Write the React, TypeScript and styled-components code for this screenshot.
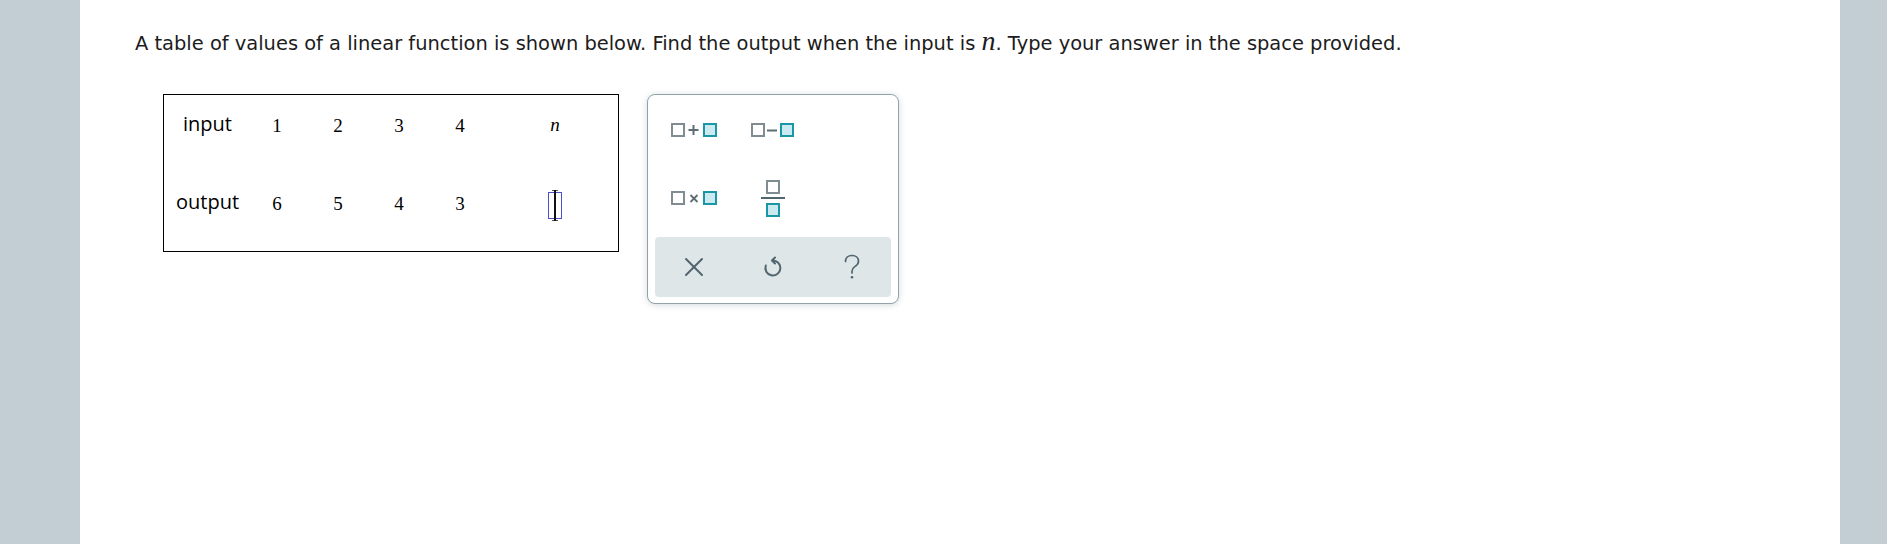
import React from "react";
import styled, { createGlobalStyle } from "styled-components";

const Global = createGlobalStyle`
  html, body, #root { margin: 0; padding: 0; height: 100%; }
  body { background: #ffffff; font-family: "DejaVu Sans", Verdana, sans-serif; }
  *, *::before, *::after { box-sizing: border-box; }
`;

const Page = styled.div`
  display: flex;
  height: 100vh;
`;

const Band = styled.div<{ $w: number }>`
  flex: 0 0 ${(p) => p.$w}px;
  background: #c2ced3;
`;

const Main = styled.main`
  flex: 1;
  background: #ffffff;
  padding: 32px 0 0 55px;
`;

const Question = styled.p`
  margin: 0;
  font-family: "DejaVu Sans", Verdana, sans-serif;
  font-size: 19.45px;
  line-height: 24px;
  color: #1c1c1c;
`;

const MathVar = styled.span<{ $size: number }>`
  font-family: "Liberation Serif", "Times New Roman", serif;
  font-style: italic;
  font-size: ${(p) => p.$size}px;
  line-height: 0;
`;

const Workspace = styled.div`
  display: flex;
  align-items: flex-start;
  gap: 28px;
  margin-top: 38px;
  padding-left: 28px;
`;

const ValueTable = styled.div`
  display: grid;
  grid-template-columns: 67px repeat(4, 50px) 118px;
  grid-template-rows: 60px 60px;
  column-gap: 11px;
  row-gap: 18px;
  padding: 0 4px 18px 10px;
  border: 1px solid #000;
  align-items: center;
  justify-items: center;
  color: #000;
`;

const RowLabel = styled.span`
  font-family: "Open Sans", "Noto Sans", sans-serif;
  font-size: 20px;
  line-height: 1;
  transform: translateY(-1px);
`;

const Num = styled.span`
  font-family: "Liberation Serif", "Times New Roman", serif;
  font-size: 19px;
  line-height: 1;
`;

const AnswerBox = styled.span`
  position: relative;
  display: inline-block;
  width: 14px;
  height: 27px;
  border: 1px solid #4d4dcf;
  margin-top: 4px;
  &::after {
    content: "";
    position: absolute;
    left: 5px;
    top: -3px;
    width: 2px;
    height: 31px;
    background: #111;
  }
  &::before {
    content: "";
    position: absolute;
    left: 3px;
    top: -3px;
    width: 6px;
    height: 31px;
    border-top: 1px solid #555;
    border-bottom: 1px solid #555;
  }
`;

const Keypad = styled.div`
  width: 252px;
  border: 1px solid #90a3aa;
  border-radius: 8px;
  box-shadow: 0 1px 6px rgba(40, 60, 70, 0.2);
  padding: 7px 7px 6px;
  background: #fff;
  display: flex;
  flex-direction: column;
  gap: 9px;
`;

const KeyGrid = styled.div`
  display: grid;
  grid-template-columns: repeat(3, 1fr);
  grid-template-rows: 58px 58px;
  row-gap: 10px;
`;

const Key = styled.button`
  display: flex;
  align-items: center;
  justify-content: center;
  background: transparent;
  border: none;
  padding: 0;
  margin: 0;
  cursor: pointer;
`;

const ActionBar = styled.div`
  display: grid;
  grid-template-columns: repeat(3, 1fr);
  height: 60px;
  background: #dfe6e8;
  border-radius: 4px;
`;

const GRAY = "#7f8d92";
const TEAL = "#1a97a5";
const FILL = "#cbe9f0";
const INK = "#4f6670";

const Boxes = ({ op }: { op: "+" | "-" | "x" }) => {
  const w = op === "-" ? 43 : 47;
  const rightX = op === "-" ? 29 : 32;
  return (
    <svg width={w} height={16} viewBox={`0 0 ${w} 16`}>
      <rect x={1} y={1} width={12} height={12} fill="#fff" stroke={GRAY} strokeWidth={2} />
      {op === "+" && (
        <g stroke="#5c6d73" strokeWidth={2}>
          <line x1={17.5} y1={7} x2={27.5} y2={7} />
          <line x1={22.5} y1={2} x2={22.5} y2={12} />
        </g>
      )}
      {op === "-" && <line x1={16} y1={7.5} x2={26} y2={7.5} stroke="#5c6d73" strokeWidth={2} />}
      {op === "x" && (
        <g stroke="#5c6d73" strokeWidth={1.8}>
          <line x1={19.5} y1={4} x2={26.5} y2={11} />
          <line x1={26.5} y1={4} x2={19.5} y2={11} />
        </g>
      )}
      <rect x={rightX + 1} y={1} width={12} height={12} fill={FILL} stroke={TEAL} strokeWidth={2} />
    </svg>
  );
};

const FractionIcon = () => (
  <svg width={24} height={38} viewBox="0 0 24 38">
    <rect x={6} y={1} width={12} height={12} fill="#fff" stroke={GRAY} strokeWidth={2} />
    <line x1={0} y1={18} x2={24} y2={18} stroke={INK} strokeWidth={2} />
    <rect x={6} y={24} width={12} height={12} fill={FILL} stroke={TEAL} strokeWidth={2} />
  </svg>
);

const CloseIcon = () => (
  <svg width={20} height={20} viewBox="0 0 20 20">
    <g stroke={INK} strokeWidth={2} strokeLinecap="round">
      <line x1={2} y1={2} x2={18} y2={18} />
      <line x1={18} y1={2} x2={2} y2={18} />
    </g>
  </svg>
);

const UndoIcon = () => (
  <svg width={22} height={22} viewBox="0 0 22 22" fill="none">
    <g stroke={INK} strokeWidth={2} strokeLinecap="round" strokeLinejoin="round">
      <path d="M10.5 4.5 A7.5 7.5 0 1 1 3.8 9.5" />
      <path d="M13 1.5 L10 4.5 L13 7.5" />
    </g>
  </svg>
);

const HelpIcon = () => (
  <svg width={18} height={26} viewBox="0 0 18 26" fill="none">
    <path
      d="M2.5 7.5 C2.5 4 5 1.5 9 1.5 C13 1.5 15.5 4 15.5 7.2 C15.5 10 13.8 11.3 11.8 12.6 C10 13.8 9 15 9 17.2 V19"
      stroke={INK}
      strokeWidth={1.7}
      strokeLinecap="round"
    />
    <circle cx={9} cy={23.3} r={1.3} fill={INK} />
  </svg>
);

const inputs = ["1", "2", "3", "4"];
const outputs = ["6", "5", "4", "3"];

export default function App() {
  return (
    <>
      <Global />
      <Page>
        <Band $w={80} />
        <Main>
          <Question>
            A table of values of a linear function is shown below. Find the output when the input is{" "}
            <MathVar $size={28}>n</MathVar>. Type your answer in the space provided.
          </Question>
          <Workspace>
            <ValueTable>
              <RowLabel>input</RowLabel>
              {inputs.map((v) => (
                <Num key={"i" + v}>{v}</Num>
              ))}
              <MathVar $size={19}>n</MathVar>
              <RowLabel>output</RowLabel>
              {outputs.map((v, i) => (
                <Num key={"o" + i}>{v}</Num>
              ))}
              <AnswerBox />
            </ValueTable>
            <Keypad>
              <KeyGrid>
                <Key aria-label="add">
                  <Boxes op="+" />
                </Key>
                <Key aria-label="subtract">
                  <Boxes op="-" />
                </Key>
                <span />
                <Key aria-label="multiply">
                  <Boxes op="x" />
                </Key>
                <Key aria-label="fraction">
                  <FractionIcon />
                </Key>
                <span />
              </KeyGrid>
              <ActionBar>
                <Key aria-label="clear">
                  <CloseIcon />
                </Key>
                <Key aria-label="undo">
                  <UndoIcon />
                </Key>
                <Key aria-label="help">
                  <HelpIcon />
                </Key>
              </ActionBar>
            </Keypad>
          </Workspace>
        </Main>
        <Band $w={47} />
      </Page>
    </>
  );
}
